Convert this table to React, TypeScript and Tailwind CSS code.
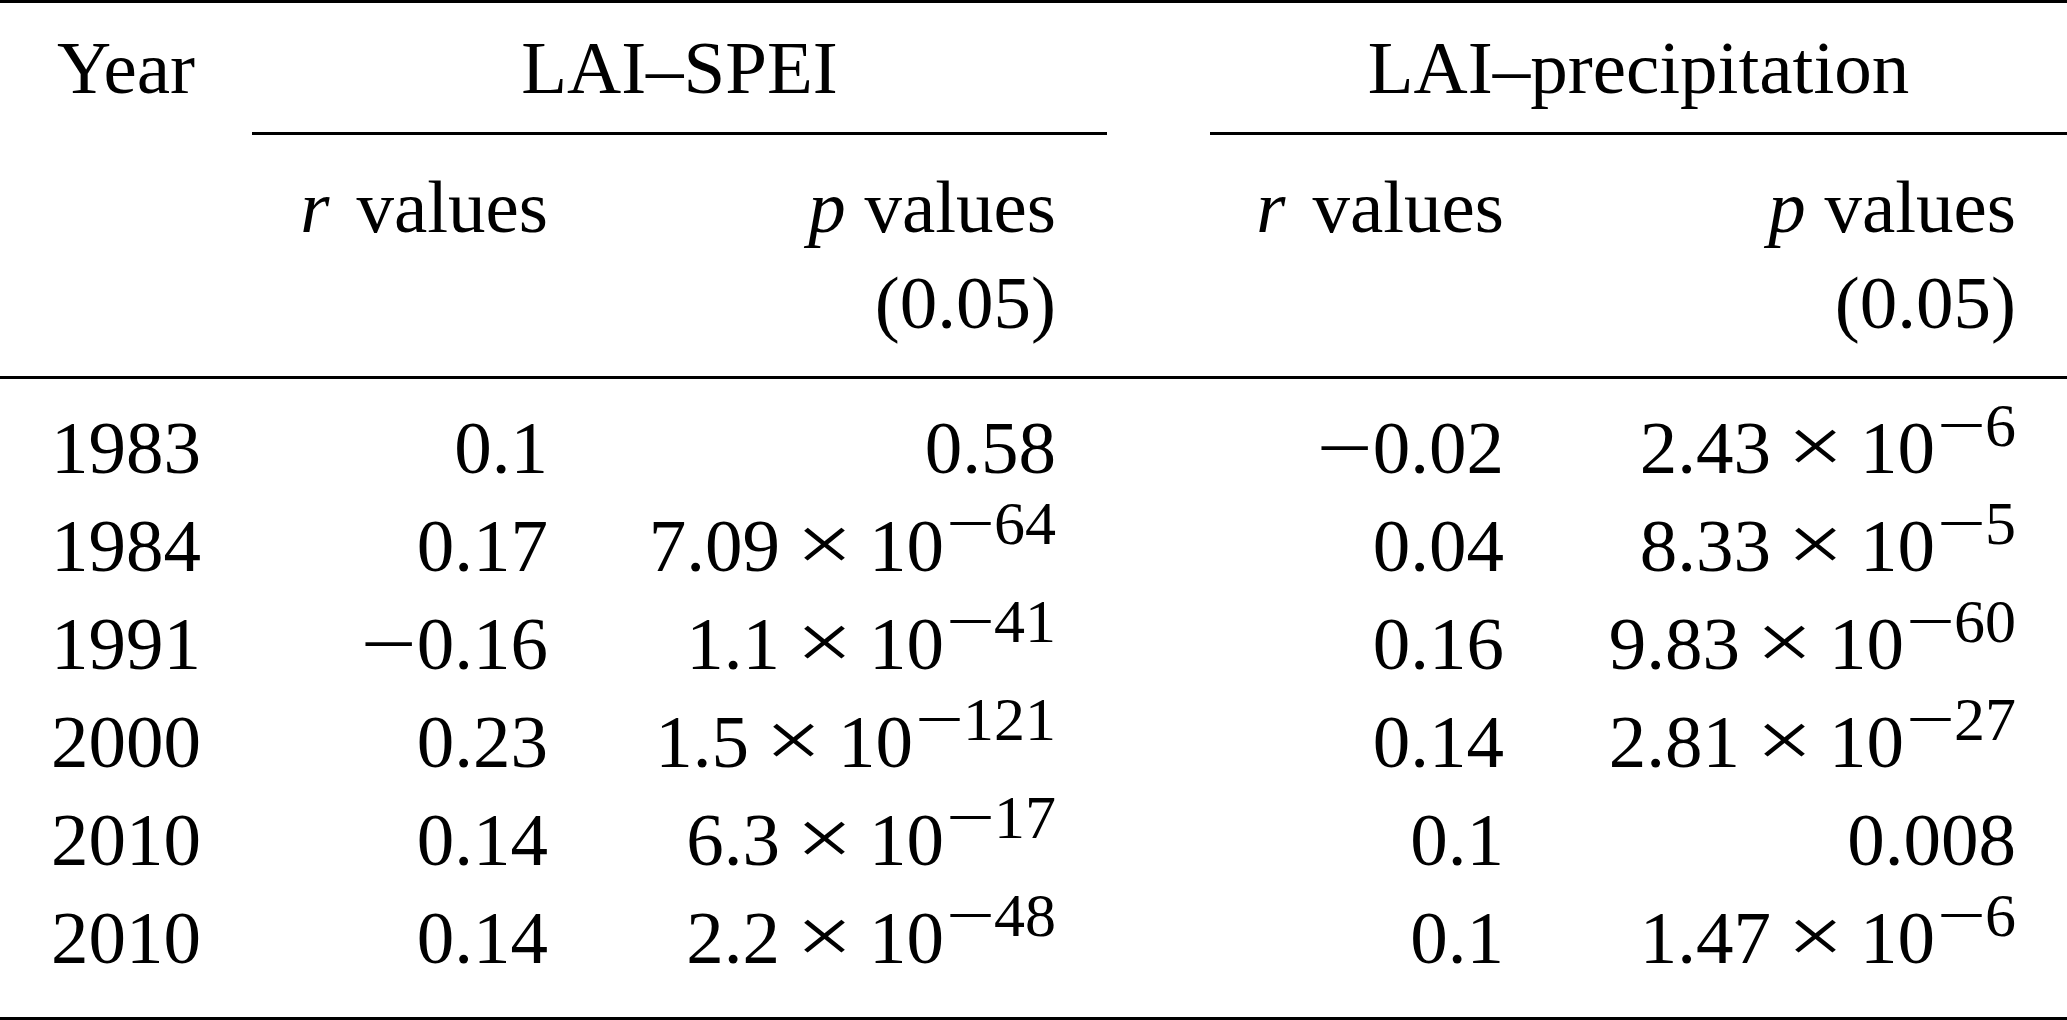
import React from 'react';

type Val = { m: string; x?: string; e?: string };
type Row = { year: string; r1: string; p1: Val; r2: string; p2: Val };

// m = mantissa, x = power base, e = exponent digits (always negative here)
const rows: Row[] = [
  { year: '1983', r1: '0.1', p1: { m: '0.58' }, r2: '-0.02', p2: { m: '2.43', x: '10', e: '6' } },
  { year: '1984', r1: '0.17', p1: { m: '7.09', x: '10', e: '64' }, r2: '0.04', p2: { m: '8.33', x: '10', e: '5' } },
  { year: '1991', r1: '-0.16', p1: { m: '1.1', x: '10', e: '41' }, r2: '0.16', p2: { m: '9.83', x: '10', e: '60' } },
  { year: '2000', r1: '0.23', p1: { m: '1.5', x: '10', e: '121' }, r2: '0.14', p2: { m: '2.81', x: '10', e: '27' } },
  { year: '2010', r1: '0.14', p1: { m: '6.3', x: '10', e: '17' }, r2: '0.1', p2: { m: '0.008' } },
  { year: '2010', r1: '0.14', p1: { m: '2.2', x: '10', e: '48' }, r2: '0.1', p2: { m: '1.47', x: '10', e: '6' } },
];

// same column template for head and body so the columns line up
const COLS = 'grid grid-cols-[252px_296px_559px_103px_294px_563px]';

// the math minus in the source is wider than Liberation's: stretch it, keep the thin stroke
function Num({ s }: { s: string }) {
  if (!s.startsWith('-')) return <>{s}</>;
  return (
    <>
      <span className="inline-block w-[57px] text-center scale-x-[1.33]">−</span>
      {s.slice(1)}
    </>
  );
}

function Sci({ v }: { v: Val }) {
  if (!v.x) return <>{v.m}</>;
  return (
    <span className="whitespace-nowrap">
      {v.m}
      <span className="inline-block w-[89px] text-center text-[80px] leading-[0px] scale-x-[1.25]">×</span>
      {v.x}
      <sup className="relative top-[-27px] ml-[3px] text-[62px]">
        <span className="inline-block w-[47px] text-center scale-x-[1.4]">−</span>
        {v.e}
      </sup>
    </span>
  );
}

function RHead() {
  return (
    <>
      <i>r</i>
      <span className="ml-[27px]">values</span>
    </>
  );
}

function PHead() {
  return (
    <>
      <i>p</i> values
      <br />
      (0.05)
    </>
  );
}

export default function App() {
  return (
    <div className="w-[2067px] h-[1020px] bg-white text-black font-['Liberation_Serif',serif] text-[75px]">
      <div className="border-t-[3px] border-black">
        {/* head */}
        <div className={COLS}>
          <div className="pt-[16px] pb-[15px] leading-[98px] text-center">Year</div>
          <div className="col-span-2 pt-[16px] pb-[15px] leading-[98px] text-center border-b-[3px] border-black">
            LAI–SPEI
          </div>
          <div />
          <div className="col-span-2 pt-[16px] pb-[15px] leading-[98px] text-center border-b-[3px] border-black">
            LAI–precipitation
          </div>

          <div />
          <div className="pt-[24px] pb-[25px] leading-[96px] text-right whitespace-nowrap">
            <RHead />
          </div>
          <div className="pt-[24px] pb-[25px] pr-[51px] leading-[96px] text-right">
            <PHead />
          </div>
          <div />
          <div className="pt-[24px] pb-[25px] leading-[96px] text-right whitespace-nowrap">
            <RHead />
          </div>
          <div className="pt-[24px] pb-[25px] pr-[51px] leading-[96px] text-right">
            <PHead />
          </div>
        </div>

        <div className="h-[3px] bg-black" />

        {/* body */}
        <div className={`${COLS} pt-[20px] pb-[30px] leading-[98px] border-b-[3px] border-black`}>
          {rows.map((r, i) => (
            <React.Fragment key={i}>
              <div className="text-center">{r.year}</div>
              <div className="text-right">
                <Num s={r.r1} />
              </div>
              <div className="text-right pr-[51px]">
                <Sci v={r.p1} />
              </div>
              <div />
              <div className="text-right">
                <Num s={r.r2} />
              </div>
              <div className="text-right pr-[51px]">
                <Sci v={r.p2} />
              </div>
            </React.Fragment>
          ))}
        </div>
      </div>
    </div>
  );
}
